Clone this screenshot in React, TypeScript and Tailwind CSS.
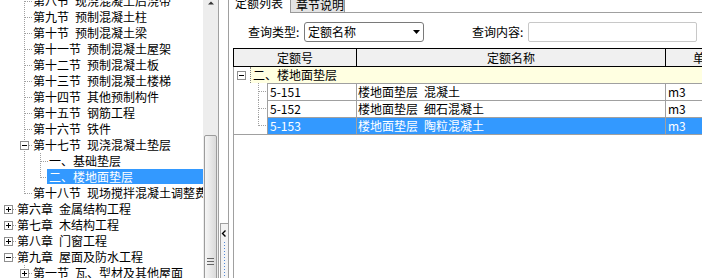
import React from 'react';

type Col = { v?: 'full' | 'top'; stub?: boolean; box?: '+' | '-' };

const dot = { stroke: '#a0a0a0', strokeDasharray: '1 1', shapeRendering: 'crispEdges' as const };

function Box({ x, y, kind }: { x: number; y: number; kind: '+' | '-' }) {
  return (
    <g shapeRendering="crispEdges">
      <rect x={x + 0.5} y={y + 0.5} width="8" height="8" fill="#fff" stroke="#8f8f8f" />
      <line x1={x + 2} y1={y + 4.5} x2={x + 7} y2={y + 4.5} stroke="#000" />
      {kind === '+' && <line x1={x + 4.5} y1={y + 2} x2={x + 4.5} y2={y + 7} stroke="#000" />}
    </g>
  );
}

function Conn({ c }: { c: Col }) {
  return (
    <svg width="16" height="16" className="block shrink-0">
      {c.v === 'full' && <line x1="8.5" y1="0" x2="8.5" y2="16" {...dot} />}
      {c.v === 'top' && <line x1="8.5" y1="0" x2="8.5" y2="9" {...dot} />}
      {c.stub && <line x1={c.box ? 13 : 9} y1="8.5" x2="16" y2="8.5" {...dot} />}
      {c.box && <Box x={4} y={4} kind={c.box} />}
    </svg>
  );
}

type Row = { cols: Col[]; text: string; sel?: boolean };
const sec: Col[] = [{}, { v: 'full', stub: true }];
const rows: Row[] = [
  { cols: sec, text: '第八节 现浇混凝土后浇带' },
  { cols: sec, text: '第九节 预制混凝土柱' },
  { cols: sec, text: '第十节 预制混凝土梁' },
  { cols: sec, text: '第十一节 预制混凝土屋架' },
  { cols: sec, text: '第十二节 预制混凝土板' },
  { cols: sec, text: '第十三节 预制混凝土楼梯' },
  { cols: sec, text: '第十四节 其他预制构件' },
  { cols: sec, text: '第十五节 钢筋工程' },
  { cols: sec, text: '第十六节 铁件' },
  { cols: [{}, { v: 'full', stub: true, box: '-' }], text: '第十七节 现浇混凝土垫层' },
  { cols: [{}, { v: 'full' }, { v: 'full', stub: true }], text: '一、基础垫层' },
  { cols: [{}, { v: 'full' }, { v: 'top', stub: true }], text: '二、楼地面垫层', sel: true },
  { cols: [{}, { v: 'top', stub: true }], text: '第十八节 现场搅拌混凝土调整费' },
  { cols: [{ stub: true, box: '+' }], text: '第六章 金属结构工程' },
  { cols: [{ stub: true, box: '+' }], text: '第七章 木结构工程' },
  { cols: [{ stub: true, box: '+' }], text: '第八章 门窗工程' },
  { cols: [{ stub: true, box: '-' }], text: '第九章 屋面及防水工程' },
  { cols: [{}, { v: 'full', stub: true, box: '+' }], text: '第一节 瓦、型材及其他屋面' },
];

function Tree() {
  return (
    <div className="w-[203px] shrink-0 overflow-hidden">
      <div className="-mt-[7px] flex flex-col">
        {rows.map((r, i) => (
          <div key={i} className="flex h-4 whitespace-nowrap [word-spacing:3.3px]">
            {r.cols.map((c, j) => (
              <Conn key={j} c={c} />
            ))}
            {r.sel ? (
              <span className="-ml-px h-[15px] flex-1 bg-[#3399ff] pl-[2px] leading-[15px] text-white">{r.text}</span>
            ) : (
              <span className="pl-px leading-4">{r.text}</span>
            )}
          </div>
        ))}
      </div>
    </div>
  );
}

function Scrollbar() {
  return (
    <div className="flex w-[16px] shrink-0 flex-col border-r border-[#a0a0a0] bg-[#ededed]">
      <svg width="15" height="6" className="block shrink-0">
        <polygon points="5,4.5 11,4.5 8,1.5" fill="#333" />
      </svg>
      <div className="mx-px mt-[129px] flex h-[250px] shrink-0 flex-col items-center rounded-[2px] border border-[#9c9c9c] bg-linear-to-r from-[#f6f6f6] to-[#dadada] pt-[122px]">
        <div className="flex flex-col gap-[2px]">
          <div className="h-px w-[7px] bg-[#666]" />
          <div className="h-px w-[7px] bg-[#666]" />
          <div className="h-px w-[7px] bg-[#666]" />
        </div>
      </div>
    </div>
  );
}

function Splitter() {
  return (
    <div className="flex w-[9px] shrink-0 flex-col">
      <div className="h-[223px] shrink-0 bg-white" />
      <div className="ml-px flex flex-1 flex-col border-l border-t border-[#a0a0a0] bg-[#f3f3f3]">
        <svg width="7" height="60" className="mt-[6px] block">
          <polyline points="4.5,0.5 1.5,3.5 4.5,6.5" fill="none" stroke="#000" strokeWidth="1.4" />
          <line x1="3.5" y1="12" x2="3.5" y2="60" stroke="#4f86d6" strokeDasharray="1 2" shapeRendering="crispEdges" />
        </svg>
      </div>
    </div>
  );
}

function GridIndent({ last }: { last?: boolean }) {
  return (
    <svg width="33" height="17" className="block shrink-0">
      <line x1="24.5" y1="0" x2="24.5" y2={last ? 9 : 17} {...dot} />
      <line x1="25" y1="8.5" x2="33" y2="8.5" {...dot} />
    </svg>
  );
}

const data = [
  { code: '5-151', name: '楼地面垫层 混凝土', unit: 'm3' },
  { code: '5-152', name: '楼地面垫层 细石混凝土', unit: 'm3' },
  { code: '5-153', name: '楼地面垫层 陶粒混凝土', unit: 'm3', sel: true },
];

function Right() {
  return (
    <div className="flex min-w-0 flex-1 flex-col overflow-hidden border-l border-[#a0a0a0]">
      <div className="flex h-[13px] shrink-0">
        <div className="w-[61px] shrink-0">
          <div className="-mt-[5px] pl-[6px] leading-4">定额列表</div>
        </div>
        <div className="w-[55px] shrink-0 border-x border-b border-[#999] bg-[#e3e3e3]">
          <div className="-mt-[3px] pl-[5px] leading-4">章节说明</div>
        </div>
        <div className="flex-1 border-b border-[#a0a0a0]" />
      </div>

      <div className="mt-[9px] flex h-[20px] shrink-0 items-center pl-[19px]">
        <span className="w-[56px] shrink-0 leading-4">查询类型:</span>
        <div className="flex h-[20px] w-[120px] shrink-0 items-center justify-between rounded-[3px] border border-[#7a7a7a] bg-white pl-[3px] pr-[3px]">
          <span className="leading-4">定额名称</span>
          <svg width="7" height="4" className="block">
            <polygon points="0,0 7,0 3.5,4" fill="#000" />
          </svg>
        </div>
        <span className="ml-[48px] w-[56px] shrink-0 leading-4">查询内容:</span>
        <div className="h-[20px] w-[169px] shrink-0 rounded-[2px] border border-[#c8c8c8] bg-white" />
      </div>

      <div className="ml-[4px] mt-[6px] flex w-[511px] flex-1 flex-col">
        <div className="flex h-[19px] shrink-0 border-y border-l border-black bg-[#f0f0f0] leading-[17px]">
          <div className="w-[123px] shrink-0 border-r border-black text-center">定额号</div>
          <div className="w-[309px] shrink-0 border-r border-black text-center">定额名称</div>
          <div className="w-[78px] shrink-0 text-center">单位</div>
        </div>
        <div className="flex flex-1 flex-col border-l border-[#a0a0a0]">
          <div className="flex h-4 shrink-0">
            <svg width="16" height="16" className="block shrink-0">
              <Box x={3} y={4} kind="-" />
            </svg>
            <div className="flex-1 border-l border-dotted border-[#808080] bg-[#ffffe1] pl-[2px] leading-4">二、楼地面垫层</div>
          </div>
          {data.map((d, i) => {
            const cell = d.sel ? 'bg-[#3399ff] text-white' : 'bg-white';
            return (
              <div key={i} className="flex h-[17px] shrink-0 leading-4">
                <GridIndent last={i === data.length - 1} />
                <div className={`w-[90px] shrink-0 border-x border-t border-[#a0a0a0] pl-[2px] ${cell}`}>{d.code}</div>
                <div className={`w-[309px] shrink-0 border-r border-t border-[#a0a0a0] pl-px [word-spacing:3.3px] ${cell}`}>{d.name}</div>
                <div className={`w-[78px] shrink-0 border-t border-[#a0a0a0] pl-[2px] ${cell}`}>{d.unit}</div>
              </div>
            );
          })}
          <div className="border-t border-[#a0a0a0]" />
        </div>
      </div>
    </div>
  );
}

export default function App() {
  return (
    <div className="flex h-[278px] w-[702px] overflow-hidden bg-white font-['Noto_Sans_CJK_SC',sans-serif] text-[12px] text-black">
      <Tree />
      <Scrollbar />
      <Splitter />
      <Right />
    </div>
  );
}
